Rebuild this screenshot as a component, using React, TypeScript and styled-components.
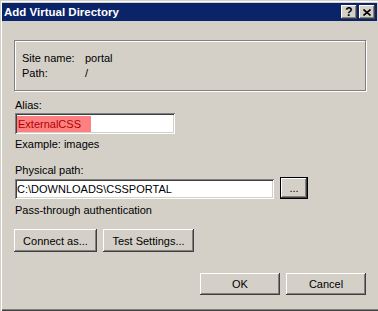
import styled, { createGlobalStyle, css } from "styled-components"

const GlobalStyle = createGlobalStyle`
  html, body {
    margin: 0;
    padding: 0;
    background: #d4d0c8;
  }
  * {
    box-sizing: border-box;
  }
`

const raised = css`
  background: #d4d0c8;
  box-shadow: inset -1px -1px 0 #404040, inset 1px 1px 0 #ffffff, inset -2px -2px 0 #808080, inset 2px 2px 0 #d4d0c8;
`

const sunken = css`
  background: #ffffff;
  box-shadow: inset 1px 1px 0 #808080, inset -1px -1px 0 #ffffff, inset 2px 2px 0 #404040, inset -2px -2px 0 #d4d0c8;
`

const DialogWindow = styled.div`
  width: 378px;
  height: 311px;
  display: flex;
  flex-direction: column;
  padding: 3px 1px 2px 2px;
  background: #d4d0c8;
  font-family: "Liberation Sans", Tahoma, Arial, sans-serif;
  font-size: 11px;
  color: #000;
  box-shadow: inset 1px 1px 0 #d4d0c8, inset 2px 2px 0 #ffffff, inset 0 -1px 0 #404040, inset 0 -2px 0 #808080;
`

const TitleBar = styled.div`
  flex: none;
  height: 18px;
  display: flex;
  align-items: center;
  padding: 0 2px 0 2px;
  background: #0a246a;
`

const TitleText = styled.span`
  flex: 1;
  color: #fff;
  font-weight: bold;
  font-size: 11.5px;
`

const CaptionButton = styled.span`
  ${raised};
  width: 16px;
  height: 14px;
  display: flex;
  align-items: center;
  justify-content: center;
  margin-left: 2px;
  font-weight: bold;
  font-size: 12px;
  line-height: 1;
  color: #000;
`

const Body = styled.div`
  flex: 1;
  display: flex;
  flex-direction: column;
  padding: 19px 11px 0 12px;
`

const GroupBox = styled.div`
  height: 51px;
  padding: 9px 7px;
  border: 1px solid #808080;
  box-shadow: inset 1px 1px 0 #ffffff, 1px 1px 0 #ffffff;
  display: grid;
  grid-template-columns: 63px 1fr;
  grid-auto-rows: 15px;
  align-items: center;
`

const Text = styled.div<{ $top: number }>`
  margin-top: ${(p) => p.$top}px;
  padding-left: 1px;
  line-height: 13px;
  height: 13px;
  white-space: nowrap;
`

const Field = styled.div<{ $width: number }>`
  ${sunken};
  width: ${(p) => p.$width}px;
  height: 20px;
  display: flex;
  align-items: center;
  padding: 0 2px;
  margin-left: 1px;
  white-space: nowrap;
`

const Selected = styled.span`
  display: inline-block;
  height: 16px;
  width: 74px;
  line-height: 16px;
  padding-left: 1px;
  background: #ff8080;
  color: #b00000;
`

const Row = styled.div<{ $top: number; $end?: boolean }>`
  display: flex;
  align-items: flex-end;
  gap: 6px;
  margin-top: ${(p) => p.$top}px;
  justify-content: ${(p) => (p.$end ? "flex-end" : "flex-start")};
`

const Button = styled.div<{ $width: number; $height?: number; $default?: boolean }>`
  ${raised};
  width: ${(p) => p.$width}px;
  height: ${(p) => p.$height ?? 23}px;
  display: flex;
  align-items: center;
  justify-content: center;
  white-space: nowrap;
  ${(p) =>
    p.$default &&
    css`
      box-shadow: inset 0 0 0 1px #000, inset -2px -2px 0 #404040, inset 2px 2px 0 #ffffff, inset -3px -3px 0 #808080;
    `}
`

const App = () => {
  return (
    <>
      <GlobalStyle />
      <DialogWindow>
        <TitleBar>
          <TitleText>Add Virtual Directory</TitleText>
          <CaptionButton>?</CaptionButton>
          <CaptionButton>
            <svg width="8" height="7" viewBox="0 0 8 7">
              <path d="M0.5 0.5 L7.5 6.5 M7.5 0.5 L0.5 6.5" stroke="#000" strokeWidth="1.6" />
            </svg>
          </CaptionButton>
        </TitleBar>
        <Body>
          <GroupBox>
            <span>Site name:</span>
            <span>portal</span>
            <span>Path:</span>
            <span>/</span>
          </GroupBox>
          <Text $top={8}>Alias:</Text>
          <Field $width={160} style={{ marginTop: 1, height: 21 }}>
            <Selected>ExternalCSS</Selected>
          </Field>
          <Text $top={4}>Example: images</Text>
          <Text $top={13}>Physical path:</Text>
          <Row $top={0}>
            <Field $width={259}>C:\DOWNLOADS\CSSPORTAL</Field>
            <Button $width={28} $height={22} $default>
              ...
            </Button>
          </Row>
          <Text $top={5}>Pass-through authentication</Text>
          <Row $top={12}>
            <Button $width={83}>Connect as...</Button>
            <Button $width={91}>Test Settings...</Button>
          </Row>
          <Row $top={21} $end>
            <Button $width={80} $height={22}>
              OK
            </Button>
            <Button $width={80} $height={22}>
              Cancel
            </Button>
          </Row>
        </Body>
      </DialogWindow>
    </>
  )
}

export default App
